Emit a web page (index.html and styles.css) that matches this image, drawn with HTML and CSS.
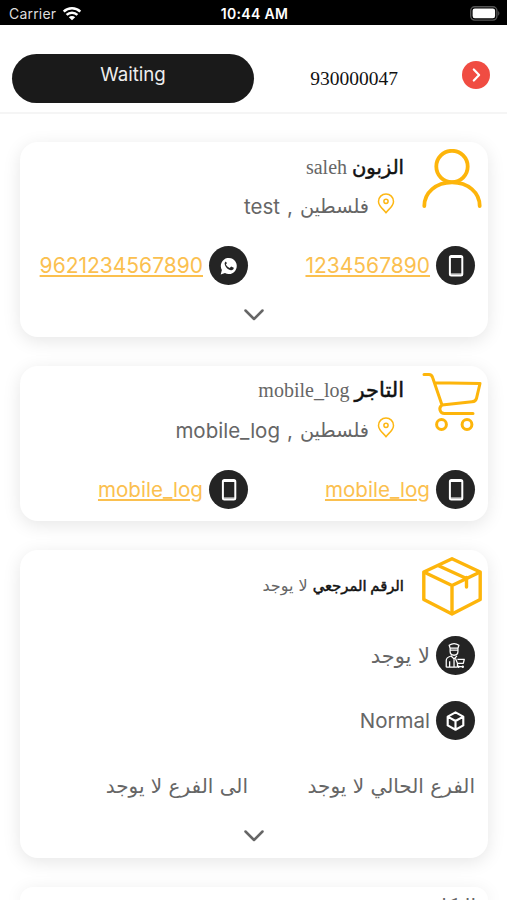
FILE: index.html
```html
<!DOCTYPE html>
<html lang="ar" dir="rtl">
<head>
<meta charset="utf-8">
<title>930000047</title>
<link rel="stylesheet" href="styles.css">
</head>
<body>
<svg width="0" height="0" class="defs">
  <symbol id="phone" viewBox="0 0 39 39"><rect x="13.900" y="10" width="12.400" height="19.600" rx="1.500" fill="none" stroke="#fff" stroke-width="2"/><path d="M14 11.500h12.300M14 28h12.300" stroke="#fff" stroke-width="1"/></symbol>
  <symbol id="pin" viewBox="0 0 18 21"><path d="M9 19.800C7.300 16.800 1.500 13.500 1.500 8.400a7.500 7.500 0 0 1 15 0C16.500 13.500 10.700 16.800 9 19.800z" fill="none" stroke="#fdb714" stroke-width="1.500" stroke-linejoin="round"/><circle cx="9" cy="8.300" r="2.100" fill="none" stroke="#fdb714" stroke-width="1.500"/></symbol>
  <symbol id="down" viewBox="0 0 22 14"><path d="M2.500 2.500 11 11l8.500-8.500" fill="none" stroke="#666" stroke-width="2.500" stroke-linecap="round" stroke-linejoin="round"/></symbol>
</svg>
<div class="status" dir="ltr">
  <div class="carrier"><span>Carrier</span>
    <svg width="20" height="15" viewBox="0 0 20 15"><g fill="none" stroke="#fff" stroke-width="2.500"><path d="M1.700 5.700a11.800 11.800 0 0 1 16.600 0"/><path d="M4.600 8.900a7.700 7.700 0 0 1 10.800 0"/></g><path d="M10 14.300 6.800 11.200a4.600 4.600 0 0 1 6.400 0z" fill="#fff"/></svg>
  </div>
  <div class="time">10:44 AM</div>
  <svg class="battery" width="30" height="15" viewBox="0 0 30 15"><rect x=".7" y=".7" width="26.200" height="13.400" rx="4" fill="none" stroke="#555" stroke-width="1.400"/><rect x="2.600" y="2.600" width="22.500" height="9.600" rx="2.200" fill="#fff"/><path d="M28.200 5c1.600.8 1.600 4 0 4.800z" fill="#555"/></svg>
</div>
<header class="top">
  <svg width="28" height="28" viewBox="0 0 28 28"><circle cx="14" cy="14" r="14" fill="#f04c42"/><path d="m11.800 8.500 5.300 5.500-5.300 5.500" fill="none" stroke="#fff" stroke-width="2.200" stroke-linecap="round" stroke-linejoin="round"/></svg>
  <div class="number">930000047</div>
  <div class="state">Waiting</div>
</header>
<main>
  <section class="card customer">
    <div class="head">
      <svg class="big" width="60" height="60" viewBox="0 0 60 60"><g fill="none" stroke="#fdb50b" stroke-width="3.800" stroke-linecap="round"><circle cx="30" cy="17.500" r="15.700"/><path d="M2.300 57C2.300 43.500 14 33.300 30 33.300s27.700 10.200 27.700 23.700"/></g></svg>
      <div class="info">
        <div class="title"><b>الزبون</b> <span>saleh</span></div>
        <div class="place"><svg width="18" height="21"><use href="#pin"/></svg><span class="ar">فلسطين</span><span>,</span><span>test</span></div>
      </div>
    </div>
    <div class="pair">
      <div class="contact"><svg class="dot"><use href="#phone"/></svg><a>1234567890</a></div>
      <div class="contact"><svg class="dot" viewBox="0 0 40 40"><path d="M12 29.300l1.200-4.700a8.200 8.200 0 1 1 3.200 3.100z" fill="#fff"/><path d="M17.300 15.900c-.8.400-1.400 1.400-1.200 2.500.6 3.300 3.500 6 6.600 6.500 1.100.1 2.300-.5 2.600-1.700l.1-.9-2.700-1.200-1.400 1.500c-2-.8-3.300-2-4-3.800l1.100-1.200-1.100-1.700z" fill="#242424"/></svg><a>9621234567890</a></div>
    </div>
    <svg class="down"><use href="#down"/></svg>
  </section>
  <section class="card merchant">
    <div class="head">
      <svg class="big" width="60" height="60" viewBox="0 0 60 60"><g fill="none" stroke="#fdb50b" stroke-width="3" stroke-linecap="round" stroke-linejoin="round"><path d="M2 1.500h5c2 0 3 1 3.600 3L20 32l30-3.200c3-.3 4-1.300 4.500-3.500L58 10.500 12.700 9.700M20 32c-4 2.900-2 8.500 2.500 8.500H51"/><circle cx="19.500" cy="51.500" r="4.900"/><circle cx="45" cy="51.500" r="4.900"/></g></svg>
      <div class="info">
        <div class="title"><b>التاجر</b> <span>mobile_log</span></div>
        <div class="place"><svg width="18" height="21"><use href="#pin"/></svg><span class="ar">فلسطين</span><span>,</span><span>mobile_log</span></div>
      </div>
    </div>
    <div class="pair names">
      <div class="contact"><svg class="dot"><use href="#phone"/></svg><a>mobile_log</a></div>
      <div class="contact"><svg class="dot"><use href="#phone"/></svg><a>mobile_log</a></div>
    </div>
  </section>
  <section class="card parcel">
    <div class="head">
      <svg class="big" width="60" height="60" viewBox="0 0 60 60"><g fill="none" stroke="#fdb50b" stroke-width="3.400" stroke-linejoin="round"><path d="M30 1.700 58.200 15v27.500L30 57 1.800 42.500V15z"/><path d="M1.800 15 30 28.500 58.200 15M30 28.500V57M16 8.500 44.500 21.500"/><path d="M44.500 20.500V30" stroke-linecap="round"/></g></svg>
      <div class="info"><div class="title"><b>الرقم المرجعي</b> <span class="ar">لا يوجد</span></div></div>
    </div>
    <div class="contact"><svg class="dot" viewBox="0 0 40 40"><g fill="none" stroke="#fff" stroke-width="1.300" stroke-linejoin="round"><path d="M13.500 9.500c3-2 7-2 10 0l-1 3h-8zM14.500 12.500h8v3.500c0 5-8 5-8 0zM14.500 14.500h8M10.500 32v-7c0-2.500 1.500-3.500 5-4.500l3 3 3-3M10.500 32h11M14 26v6M18.500 23.500V32M20 23l2 5h6l1-4h-7M22 28v3.500h6"/></g><circle cx="23" cy="31.500" r="1.200" fill="#fff"/><circle cx="27.500" cy="31.500" r="1.200" fill="#fff"/></svg><span class="ar none">لا يوجد</span></div>
    <div class="contact"><svg class="dot" viewBox="0 0 40 40"><path d="m20 11.700 8 4.300v9L20 29.500 12 25v-9zM12 16l8 4.500 8-4.500M20 20.500v9" fill="none" stroke="#fff" stroke-width="2.200" stroke-linejoin="round"/></svg><span class="kind">Normal</span></div>
    <div class="pair branches"><span class="ar">الفرع الحالي لا يوجد</span><span class="ar">الى الفرع لا يوجد</span></div>
    <svg class="down"><use href="#down"/></svg>
  </section>
  <section class="card cost"><span class="ar">التكلفة</span></section>
</main>
</body>
</html>
```
FILE: styles.css
```css
* { box-sizing: border-box; }
body { margin: 0; height: 900px; overflow: hidden; background: #fff; color: #666; font-family: Inter, "DejaVu Sans", sans-serif; }
svg { display: block; flex: none; }
.defs { position: absolute; }
.status { height: 25px; background: #000; color: #fff; display: grid; grid-template-columns: 1fr auto 1fr; align-items: center; padding: 2px 7px 0 9px; font-size: 14px; }
.carrier { display: flex; align-items: center; gap: 6px; color: #ddd; letter-spacing: .2px; }
.time { font-weight: 600; font-size: 14px; letter-spacing: .3px; }
.battery { justify-self: end; }
.top { height: 89px; border-bottom: 2px solid #f5f5f5; display: flex; align-items: center; padding: 13px 17px 0 12px; }
.number { color: #111; font: 19.500px "Liberation Serif", serif; margin-right: 64px; padding-top: 8px; }
.state { width: 242px; height: 49px; border-radius: 25px; background: #1a1a1a; color: #eee; font-size: 18.700px; line-height: 42px; text-align: center; margin-right: auto; margin-top: 7px; }
main { padding: 28px 19px 0 20px; display: flex; flex-direction: column; gap: 29px; }
.card { flex: none; border-radius: 18px; background: #fff; box-shadow: 0 4px 18px rgba(0,0,0,.1); }
.customer { height: 195px; }
.merchant { height: 155px; }
.parcel { height: 308px; }
.cost { height: 13px; padding: 7px 12px 0; border-radius: 18px 18px 0 0; overflow: hidden; }
.head { display: flex; gap: 18px; padding: 7px 6px 0 0; height: 91px; }
.title { height: 38px; font: 20px/36px "Liberation Serif", "DejaVu Sans", serif; color: #666; white-space: nowrap; }
.title b { color: #111; font-size: 19.500px; font-weight: 400; -webkit-text-stroke: .5px #111; }
.merchant .title b { font-size: 21px; }
.merchant .title { line-height: 35px; }
.place { display: flex; align-items: center; gap: 7px; padding-right: 9px; height: 39px; font-size: 20.500px; }
.place svg { margin-top: -7px; }
.ar { font-family: "DejaVu Sans", sans-serif; font-size: 20px; }
.place .ar { font-size: 19.300px; margin-right: 1px; }
.pair { display: grid; grid-template-columns: 227px 1fr; padding: 13px 13px 0 0; }
.contact { display: flex; align-items: center; gap: 6px; height: 39px; font-size: 21px; }
.dot { width: 39px; height: 39px; border-radius: 50%; background: #242424; }
a { color: #fbc04f; text-decoration: underline; text-decoration-thickness: 1.500px; text-underline-offset: 2px; }
.names .contact { font-size: 20.600px; }
.down { width: 22px; height: 14px; margin: 23px auto 0; }
.parcel .title { height: 56px; line-height: 54px; }
.parcel .title b { font-size: 14.800px; }
.parcel .title .ar { font-size: 16px; }
.parcel > .contact { padding-right: 13px; margin-bottom: 26px; }
.parcel .head { height: 86px; }
.kind { font-size: 20.500px; }
.none { font-size: 21px; }
.parcel .branches { height: 39px; align-items: center; padding-top: 0; }
.branches .ar { white-space: nowrap; }
.parcel .down { margin-top: 24px; }
```
